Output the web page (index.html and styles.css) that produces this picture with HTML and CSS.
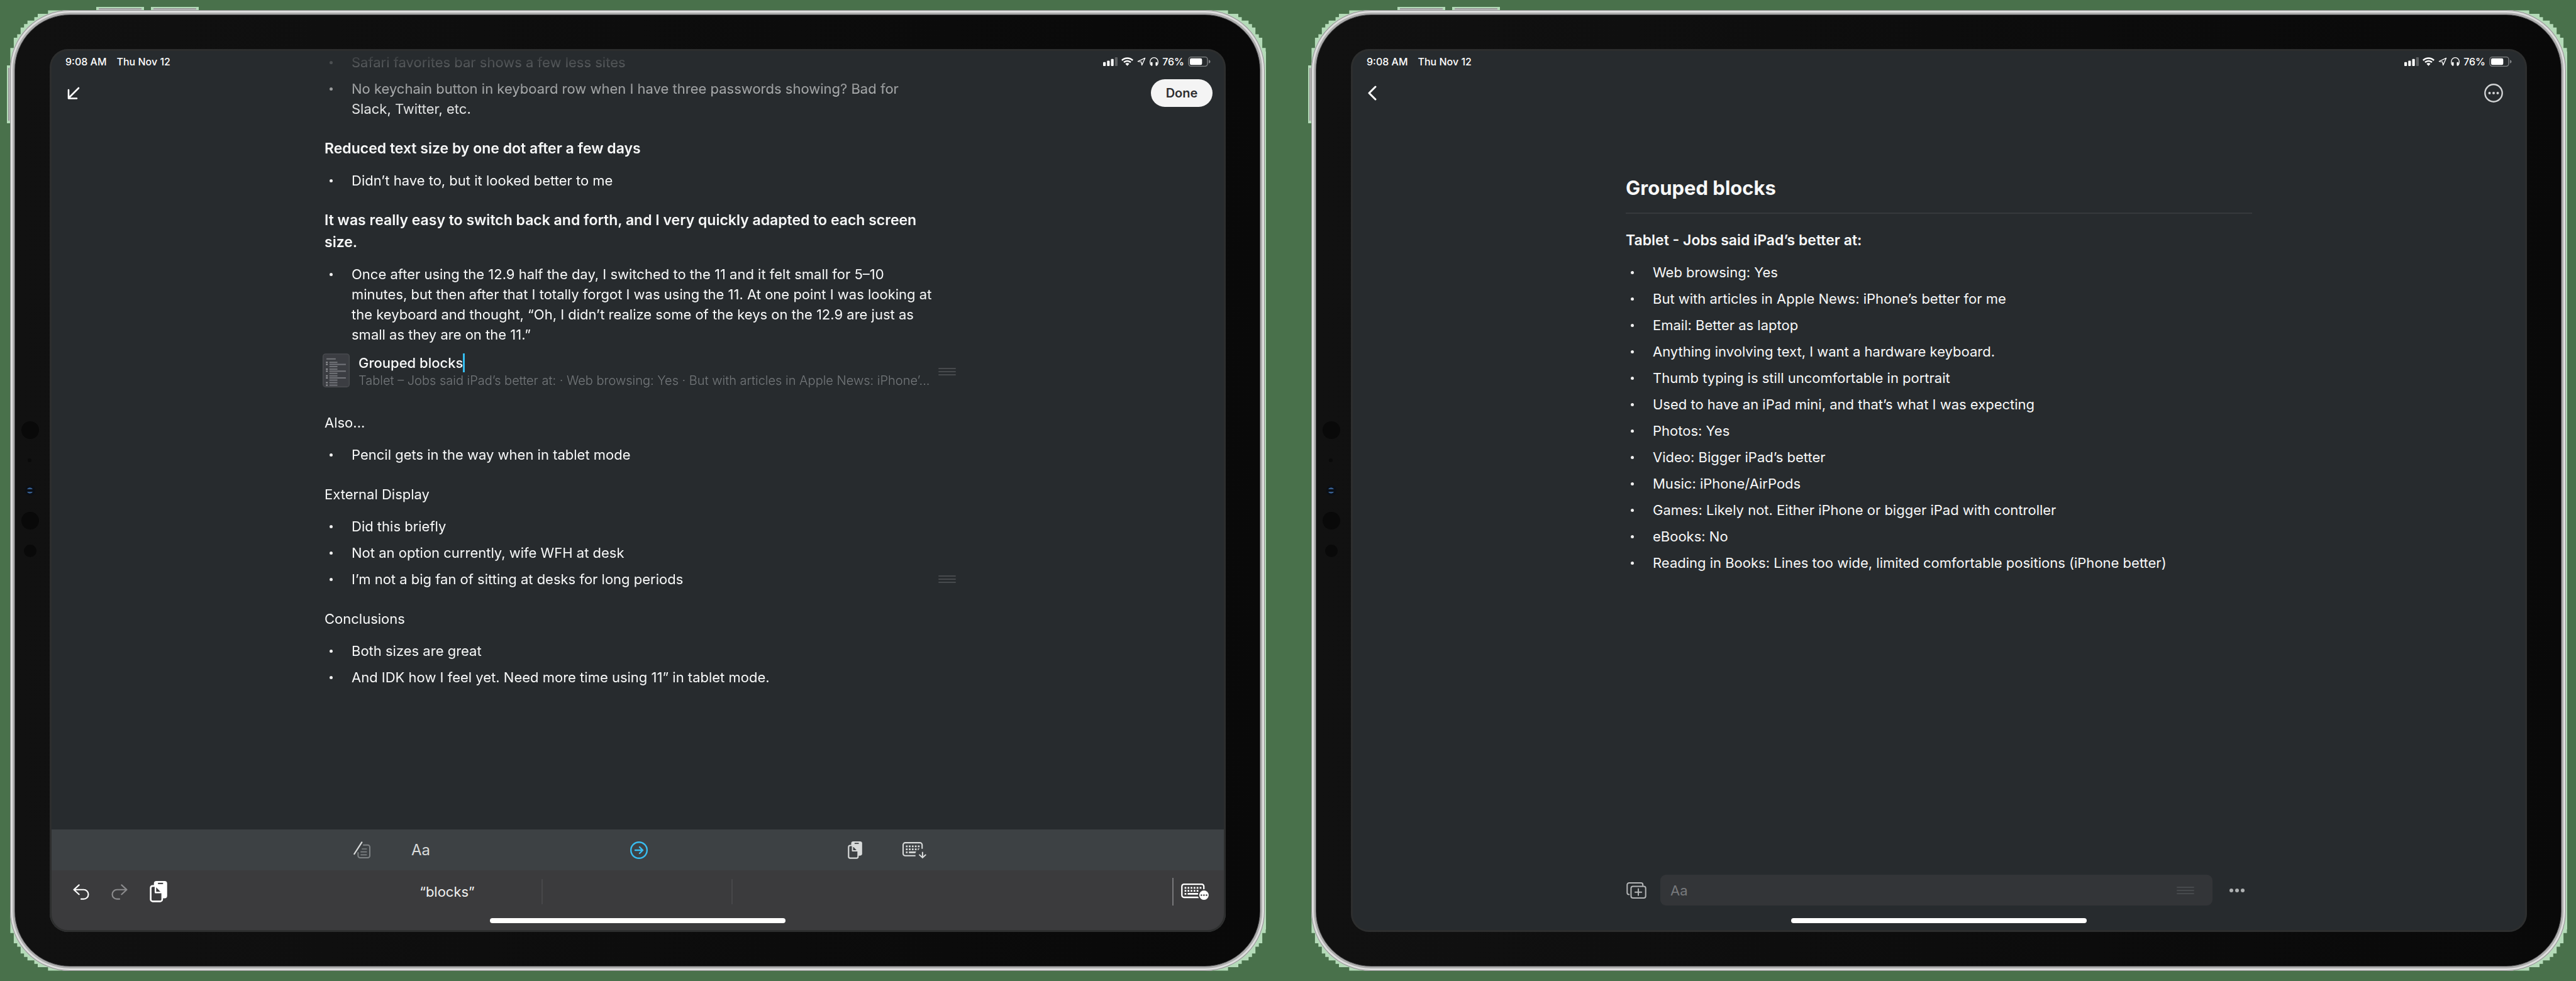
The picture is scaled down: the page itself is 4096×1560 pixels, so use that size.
FILE: index.html
```html
<!DOCTYPE html>
<html lang="en">
<head>
<meta charset="utf-8">
<title>Grouped blocks</title>
<link rel="stylesheet" href="styles.css">
</head>
<body>
<svg class="sprite" aria-hidden="true">
  <symbol id="corner" viewBox="16 16 144 144">
    <path d="M160 24H112V32H88V40H80V48H64V56H56V64H48V80H40V88H32V112H24V160H160Z" fill="#b4dbb8"/>
  </symbol>
  <symbol id="sensors" viewBox="0 0 48 220">
    <circle cx="24" cy="14" r="14" fill="#090909"/>
    <circle cx="23" cy="62" r="3" fill="#0a0a0a"/>
    <circle cx="24" cy="110" r="8" fill="#0b0f15"/>
    <path d="M19 108a5 5 0 0 1 9 0ZM19 112a5 5 0 0 0 9 0Z" fill="#375f92"/>
    <circle cx="24" cy="158" r="14" fill="#090909"/>
    <circle cx="24" cy="206" r="10" fill="#090909"/>
  </symbol>
  <symbol id="signal" viewBox="0 0 33 20">
    <rect x="0" y="11" width="6" height="9" rx="1.5"/><rect x="9" y="8" width="6" height="12" rx="1.5"/><rect x="18" y="4" width="6" height="16" rx="1.5"/><rect x="27" y="0" width="6" height="20" rx="1.5" opacity=".25"/>
  </symbol>
  <symbol id="wifi" viewBox="0 0 28 20">
    <path d="M14 0C8.600 0 3.700 2.100 0 5.600L2.600 8.400C5.600 5.500 9.600 3.900 14 3.900S22.400 5.500 25.400 8.400L28 5.600C24.300 2.100 19.400 0 14 0ZM14 6.700C10.400 6.700 7.200 8 4.700 10.300L7.300 13.100C9 11.500 11.400 10.500 14 10.500S19 11.500 20.700 13.100L23.300 10.300C20.800 8 17.600 6.700 14 6.700ZM14 13.300C12.200 13.300 10.600 14 9.400 15.100L14 20L18.600 15.100C17.400 14 15.800 13.300 14 13.300Z"/>
  </symbol>
  <symbol id="location" viewBox="0 0 20 20">
    <path d="M18 2L2 9.500L9.500 10.500L11 18Z" fill="none" stroke="#fff" stroke-width="1.900" stroke-linejoin="round"/>
  </symbol>
  <symbol id="headphones" viewBox="0 0 20 20">
    <path d="M2.500 17.500Q1 15 1 10a9 9 0 0 1 18 0Q19 15 17.500 17.500" fill="none" stroke="#fff" stroke-width="1.900"/>
    <rect x="2.500" y="11" width="4" height="8.500" rx="1.600"/><rect x="13.500" y="11" width="4" height="8.500" rx="1.600"/>
  </symbol>
  <symbol id="battery" viewBox="0 0 53 24">
    <rect x="1" y="1" width="45" height="22" rx="6" fill="none" stroke="#808385" stroke-width="2"/>
    <rect x="4" y="4" width="29" height="16" rx="3.500"/><path d="M49 8Q53 9 53 12T49 16Z" fill="#808385"/>
  </symbol>
  <symbol id="handle" viewBox="0 0 28 14">
    <path d="M1 2H27M1 7H27M1 12H27" stroke="#474a4d" stroke-width="2" stroke-linecap="round"/>
  </symbol>
  <symbol id="paste" viewBox="0 0 34 42">
    <rect x="8" y="0" width="26" height="34" rx="5" fill="currentColor"/>
    <rect x="16" y="3.500" width="10" height="2.600" fill="var(--bar)"/>
    <path d="M5.500 9.700H11L24.300 22.500V36a4 4 0 0 1-4 4H5.700a4 4 0 0 1-4-4V13.700a4 4 0 0 1 3.800-4Z" fill="var(--bar)" stroke="currentColor" stroke-width="3.200"/>
    <path d="M11 9.700V22.500H24.300L12 9.700Z" fill="var(--bar)" stroke="currentColor" stroke-width="3" stroke-linejoin="round"/>
  </symbol>
</svg>
<main class="stage">

  <section class="tablet" aria-label="Note editor">
    <svg class="halo tl"><use href="#corner"/></svg><svg class="halo tr"><use href="#corner"/></svg><svg class="halo bl"><use href="#corner"/></svg><svg class="halo br"><use href="#corner"/></svg>
    <i class="edge"></i><i class="key up"></i><i class="key down"></i><i class="key power"></i>
    <div class="shell"><div class="bezel">
      <svg class="sensors"><use href="#sensors"/></svg>
      <div class="screen">
        <header class="top over">
          <div class="status">
            <span>9:08 AM</span><span>Thu Nov 12</span>
            <div class="indicators">
              <svg class="signal"><use href="#signal"/></svg><svg class="wifi"><use href="#wifi"/></svg><svg class="location"><use href="#location"/></svg><svg class="headphones"><use href="#headphones"/></svg><span>76%</span><svg class="battery"><use href="#battery"/></svg>
            </div>
          </div>
          <nav class="nav">
            <button class="icon" aria-label="Collapse"><svg width="20" height="20" viewBox="0 0 20 20" fill="none" stroke="#fff" stroke-width="2.600" stroke-linecap="round" stroke-linejoin="round"><path d="M18 2L2 18M2 5V18.500H15"/></svg></button>
            <button class="done">Done</button>
          </nav>
        </header>
        <article class="doc fade">
          <ul>
            <li>Safari favorites bar shows a few less sites</li>
            <li>No keychain button in keyboard row when I have three passwords showing? Bad for<br>Slack, Twitter, etc.</li>
          </ul>
          <h2>Reduced text size by one dot after a few days</h2>
          <ul><li>Didn’t have to, but it looked better to me</li></ul>
          <h2>It was really easy to switch back and forth, and I very quickly adapted to each screen<br>size.</h2>
          <ul><li>Once after using the 12.9 half the day, I switched to the 11 and it felt small for 5–10<br>minutes, but then after that I totally forgot I was using the 11. At one point I was looking at<br>the keyboard and thought, “Oh, I didn’t realize some of the keys on the 12.9 are just as<br>small as they are on the 11.”</li></ul>
          <div class="card">
            <svg class="thumb" viewBox="0 0 64 80"><rect x="1" y="1" width="62" height="78" rx="6" fill="#3b3d42" stroke="#4a4c50" stroke-width="2"/>
              <g stroke="#73757a" stroke-width="3"><path d="M9 13H31M16 21H35M16 26H55M16 31H35M16 37H35M16 42H55M16 47H35M16 53H35M16 58H55M16 63H35M16 69H35M16 75H35"/><path d="M8 21H12M8 26H12M8 37H12M8 42H12M8 53H12M8 58H12M8 69H12M8 75H12" stroke="#9a9ca0"/></g></svg>
            <div class="card-text">
              <div class="card-title">Grouped blocks<i class="caret"></i></div>
              <div class="card-sub">Tablet – Jobs said iPad’s better at: · Web browsing: Yes · But with articles in Apple News: iPhone’...</div>
            </div>
            <svg class="handle"><use href="#handle"/></svg>
          </div>
          <h2 class="plain">Also...</h2>
          <ul><li>Pencil gets in the way when in tablet mode</li></ul>
          <h2 class="plain">External Display</h2>
          <ul>
            <li>Did this briefly</li>
            <li>Not an option currently, wife WFH at desk</li>
            <li>I’m not a big fan of sitting at desks for long periods<svg class="handle"><use href="#handle"/></svg></li>
          </ul>
          <h2 class="plain">Conclusions</h2>
          <ul>
            <li>Both sizes are great</li>
            <li>And IDK how I feel yet. Need more time using 11” in tablet mode.</li>
          </ul>
        </article>
        <div class="toolbar">
          <div class="tools">
            <button class="icon" aria-label="Template"><svg width="28" height="28" viewBox="0 0 42 42" fill="none" stroke-linecap="round"><path d="M24 8.500H34a5 5 0 0 1 5 5V34a5 5 0 0 1-5 5H16a5 5 0 0 1-5-5V27" stroke="#7e8284" stroke-width="3"/><path d="M21 18H31M18 25H31M18 32H31" stroke="#7e8284" stroke-width="2.600"/><path d="M20 2L2 30" stroke="#d9dbdb" stroke-width="3.400"/></svg></button>
            <button class="icon aa">Aa</button>
          </div>
          <button class="icon" aria-label="Open block"><svg width="28" height="28" viewBox="0 0 28 28" fill="none" stroke="#38bdf0" stroke-width="2.400" stroke-linecap="round" stroke-linejoin="round"><circle cx="14" cy="14" r="12.800"/><path d="M8 14H20M15 9L20 14L15 19"/></svg></button>
          <div class="tools">
            <button class="icon" aria-label="Paste"><svg class="paste"><use href="#paste"/></svg></button>
            <button class="icon" aria-label="Hide keyboard"><svg width="38" height="26" viewBox="0 0 56 38" fill="#d9dbdb"><path d="M46 15.500V6.500a5 5 0 0 0-5-5H6.500a5 5 0 0 0-5 5V27a5 5 0 0 0 5 5H30.500" fill="none" stroke="#d9dbdb" stroke-width="3"/><path d="M8 8h4v4H8zM15 8h4v4h-4zM22 8h4v4h-4zM29 8h4v4h-4zM36 8h4v4h-4zM8 15h4v4H8zM15 15h4v4h-4zM22 15h4v4h-4zM29 15h4v4h-4zM36 15h4l-3 4h-1zM8 22h4v4H8zM15 22h17l-2 4H15z"/><path d="M47 24V36.500M40 30L47 36.500L54 30" fill="none" stroke="#d9dbdb" stroke-width="3" stroke-linecap="round" stroke-linejoin="round"/></svg></button>
          </div>
        </div>
        <div class="keyboard">
          <div class="edits">
            <button class="icon" aria-label="Undo"><svg width="26" height="25" viewBox="0 0 38 37" fill="none" stroke="#fff" stroke-width="3.200" stroke-linecap="round" stroke-linejoin="round"><path d="M14 2L2 13L14 24M2 13H25a11 11 0 0 1 0 22H19"/></svg></button>
            <button class="icon" aria-label="Redo"><svg width="26" height="25" viewBox="0 0 38 37" fill="none" stroke="#8b8b8d" stroke-width="3.200" stroke-linecap="round" stroke-linejoin="round"><path d="M24 2L36 13L24 24M36 13H13a11 11 0 0 0 0 22H19"/></svg></button>
            <button class="icon" aria-label="Paste"><svg class="paste big"><use href="#paste"/></svg></button>
          </div>
          <button class="suggest">“blocks”</button><button class="suggest" aria-label="Suggestion"></button><button class="suggest" aria-label="Suggestion"></button>
          <button class="icon more-keys" aria-label="Keyboard options"><svg width="44" height="26" viewBox="0 0 64 38" fill="#fff"><rect x="1.700" y="1.700" width="51" height="30.500" rx="5" fill="none" stroke="#fff" stroke-width="3.400"/><path d="M8 8h4v4H8zM15 8h4v4h-4zM22 8h4v4h-4zM29 8h4v4h-4zM36 8h4v4h-4zM43 8h4v4h-4zM8 15h4v4H8zM15 15h4v4h-4zM22 15h4v4h-4zM29 15h4v4h-4zM36 15h4v4h-4zM8 22h4v4H8zM15 22h25v4H15z"/><circle cx="53" cy="27" r="14" fill="#3b3b3d"/><circle cx="53" cy="27" r="11"/><g fill="#3b3b3d"><circle cx="47" cy="27" r="1.900"/><circle cx="53" cy="27" r="1.900"/><circle cx="59" cy="27" r="1.900"/></g></svg></button>
        </div>
        <i class="home"></i>
      </div>
    </div></div>
  </section>

  <section class="tablet" aria-label="Grouped page">
    <svg class="halo tl"><use href="#corner"/></svg><svg class="halo tr"><use href="#corner"/></svg><svg class="halo bl"><use href="#corner"/></svg><svg class="halo br"><use href="#corner"/></svg>
    <i class="edge"></i><i class="key up"></i><i class="key down"></i><i class="key power"></i>
    <div class="shell"><div class="bezel">
      <svg class="sensors"><use href="#sensors"/></svg>
      <div class="screen">
        <header class="top">
          <div class="status">
            <span>9:08 AM</span><span>Thu Nov 12</span>
            <div class="indicators">
              <svg class="signal"><use href="#signal"/></svg><svg class="wifi"><use href="#wifi"/></svg><svg class="location"><use href="#location"/></svg><svg class="headphones"><use href="#headphones"/></svg><span>76%</span><svg class="battery"><use href="#battery"/></svg>
            </div>
          </div>
          <nav class="nav page-nav">
            <button class="icon" aria-label="Back"><svg width="14" height="24" viewBox="0 0 14 24" fill="none" stroke="#fff" stroke-width="3" stroke-linecap="round" stroke-linejoin="round"><path d="M12 2L2 12L12 22"/></svg></button>
            <button class="icon" aria-label="Options"><svg width="30" height="30" viewBox="0 0 30 30" fill="#d2d4d5"><circle cx="15" cy="15" r="13.700" fill="none" stroke="#d2d4d5" stroke-width="2.400"/><circle cx="8.500" cy="15" r="2"/><circle cx="15" cy="15" r="2"/><circle cx="21.500" cy="15" r="2"/></svg></button>
          </nav>
        </header>
        <article class="doc page">
          <h1>Grouped blocks</h1>
          <h2>Tablet - Jobs said iPad’s better at:</h2>
          <ul>
            <li>Web browsing: Yes</li>
            <li>But with articles in Apple News: iPhone’s better for me</li>
            <li>Email: Better as laptop</li>
            <li>Anything involving text, I want a hardware keyboard.</li>
            <li>Thumb typing is still uncomfortable in portrait</li>
            <li>Used to have an iPad mini, and that’s what I was expecting</li>
            <li>Photos: Yes</li>
            <li>Video: Bigger iPad’s better</li>
            <li>Music: iPhone/AirPods</li>
            <li>Games: Likely not. Either iPhone or bigger iPad with controller</li>
            <li>eBooks: No</li>
            <li>Reading in Books: Lines too wide, limited comfortable positions (iPhone better)</li>
          </ul>
        </article>
        <form class="composer">
          <button type="button" class="icon" aria-label="Add block"><svg width="32" height="26" viewBox="0 0 46 38" fill="none" stroke="#b4b6b7" stroke-width="2.900" stroke-linecap="round"><path d="M6 28.500a4.500 4.500 0 0 1-4.500-4.500V6A4.500 4.500 0 0 1 6 1.500H33.500A4.500 4.500 0 0 1 38 6V7.500"/><rect x="10.500" y="9.500" width="34" height="27" rx="4.500"/><path d="M27.500 15.500V30.500M20 23H35"/></svg></button>
          <label class="field"><input type="text" placeholder="Aa" aria-label="New block"><svg class="field-handle"><use href="#handle"/></svg></label>
          <button type="button" class="icon" aria-label="More"><svg width="26" height="8" viewBox="0 0 26 8" fill="#aeb1b2"><circle cx="4" cy="4" r="3"/><circle cx="13" cy="4" r="3"/><circle cx="22" cy="4" r="3"/></svg></button>
        </form>
        <i class="home"></i>
      </div>
    </div></div>
  </section>

</main>
</body>
</html>
```
FILE: styles.css
```css
* { box-sizing: border-box; }
body { margin: 0; background: #49714b; color: #f7f8f8; font: 22px/32px Inter, "Liberation Sans", sans-serif; }
h1, h2, ul { margin: 0; padding: 0; }
button, input { font: inherit; color: inherit; border: 0; padding: 0; background: none; }
svg { display: block; }
.sprite { display: none; }

.stage { min-height: 100vh; padding: 16px; display: flex; gap: 74px; }

/* Device body */
.tablet { position: relative; flex: 1; display: flex; isolation: isolate; }
.halo { position: absolute; z-index: -1; width: 98px; height: 98px; }
.tl { left: -5px; top: -5px; }
.tr { right: -7px; top: -5px; transform: scaleX(-1); }
.bl { left: -5px; bottom: -5px; transform: scaleY(-1); }
.br { right: -7px; bottom: -5px; transform: scale(-1); }
.edge { position: absolute; z-index: -1; right: -2px; top: 66px; bottom: 66px; width: 6px; background: #b4dbb8; }
.key { position: absolute; z-index: -1; background: linear-gradient(#8c8c8c, #ececec); border: solid #b4dbb8; border-width: 2px 4px 0; height: 7px; top: -5px; width: 76px; }
.up { left: 137px; }
.down { left: 224px; }
.power { left: -5px; top: 88px; width: 7px; height: 92px; border-width: 4px 0 4px 2px; background: linear-gradient(90deg, #8c8c8c, #ececec); }
.shell { flex: 1; display: flex; padding: 7px; border-radius: 95px; background: #adadad; box-shadow: inset 0 0 0 1px #8f9090, inset 0 0 0 4px #dedede; }
.bezel { position: relative; flex: 1; display: flex; padding: 54px 54px 54px 55px; border: 1px solid #4b4b4d; border-radius: 88px; background: linear-gradient(90deg, #111, #090909); }
.sensors { position: absolute; left: 0; top: 50%; width: 48px; height: 220px; margin-top: -110px; }
.screen { position: relative; flex: 1; min-width: 0; display: flex; flex-direction: column; overflow: hidden; border-radius: 29px; background: #272b2e; }
.screen::after { content: ""; position: absolute; inset: 0; border: 3px solid #2d2e2e; border-radius: 29px; pointer-events: none; }

/* Status and navigation */
.over { position: absolute; left: 0; right: 0; top: 0; z-index: 1; }
.status { height: 40px; padding: 0 24px 0 25px; display: flex; align-items: center; gap: 16px; font-size: 16px; line-height: 20px; font-weight: 500; color: #fff; }
.indicators { margin-left: auto; display: flex; align-items: center; gap: 6px; fill: #fff; }
.signal { width: 23px; height: 14px; }
.wifi { width: 19px; height: 14px; }
.location { width: 14px; height: 14px; }
.headphones { width: 14px; height: 14px; }
.battery { width: 36px; height: 16px; }
.nav { height: 60px; padding: 0 21px 0 28px; display: flex; align-items: center; justify-content: space-between; }
.page-nav { padding: 0 38px 0 27px; }
.done { width: 98px; height: 44px; border-radius: 22px; background: #f4f4f4; color: #2c2c2e; font-size: 20px; font-weight: 600; line-height: 24px; }
.icon { display: flex; align-items: center; }

/* Document */
.doc { flex: 1; width: 100%; max-width: 1036px; margin: 0 auto; padding: 0 20px; }
.fade { -webkit-mask-image: linear-gradient(transparent 2px, #000 108px); mask-image: linear-gradient(transparent 2px, #000 108px); }
.doc h2 { margin: 25px 0 12px; font-size: 23px; line-height: 35px; font-weight: 600; white-space: nowrap; }
.doc h2.plain { font-size: 22px; font-weight: 400; }
.doc ul { list-style: none; }
.doc li { position: relative; padding: 5px 0 5px 43px; white-space: nowrap; }
.doc li::before { content: ""; position: absolute; left: 8px; top: 19px; width: 5px; height: 5px; border-radius: 50%; background: #f0f0f0; }
.handle { position: absolute; right: -8px; top: 50%; width: 28px; height: 14px; margin-top: -7px; }
.doc.page { padding-top: 99px; }
.page h1 { padding-bottom: 17px; border-bottom: 2px solid #36393c; font-size: 31px; line-height: 44px; font-weight: 700; }

.card { position: relative; display: flex; gap: 14px; margin: 9px 0 36px -3px; }
.thumb { width: 43px; height: 54px; flex: none; }
.card-text { min-width: 0; }
.card-title { display: flex; line-height: 30px; font-weight: 500; }
.caret { width: 3px; height: 30px; background: #35bdf0; }
.card-sub { font-size: 20px; font-weight: 300; line-height: 27px; color: #74787b; white-space: nowrap; }

/* Editor bars */
.toolbar { --bar: #3d4144; height: 65px; padding: 0 476px 0 483px; display: flex; align-items: center; justify-content: space-between; background: var(--bar); color: #d9dbdb; }
.tools { display: flex; align-items: center; gap: 64px; }
.aa { font-size: 24px; }
.paste { width: 23px; height: 28px; }
.paste.big { width: 28px; height: 34px; }
.keyboard { --bar: #3b3b3d; height: 98px; padding: 12px 27px 42px 37px; display: flex; align-items: center; background: var(--bar); color: #fff; }
.edits { width: 445px; display: flex; align-items: center; gap: 35px; }
.suggest { width: 302px; height: 40px; border-right: 2px solid #47474a; color: #f0f0f0; }
.suggest:nth-of-type(3) { border-right: 0; }
.more-keys { margin-left: auto; height: 44px; padding-left: 12px; border-left: 2px solid #77777a; }
.home { position: absolute; left: 50%; bottom: 14px; width: 470px; height: 8px; margin-left: -235px; border-radius: 4px; background: #fff; }

.composer { margin: 0 448px 42px 438px; display: flex; align-items: center; gap: 22px; }
.field { flex: 1; margin-right: 4px; height: 49px; padding: 0 29px 0 16px; display: flex; align-items: center; border-radius: 9px; background: #333538; }
.field input { flex: 1; outline: 0; }
.field input::placeholder { color: #77797c; opacity: 1; }
.field-handle { width: 28px; height: 14px; }
```
